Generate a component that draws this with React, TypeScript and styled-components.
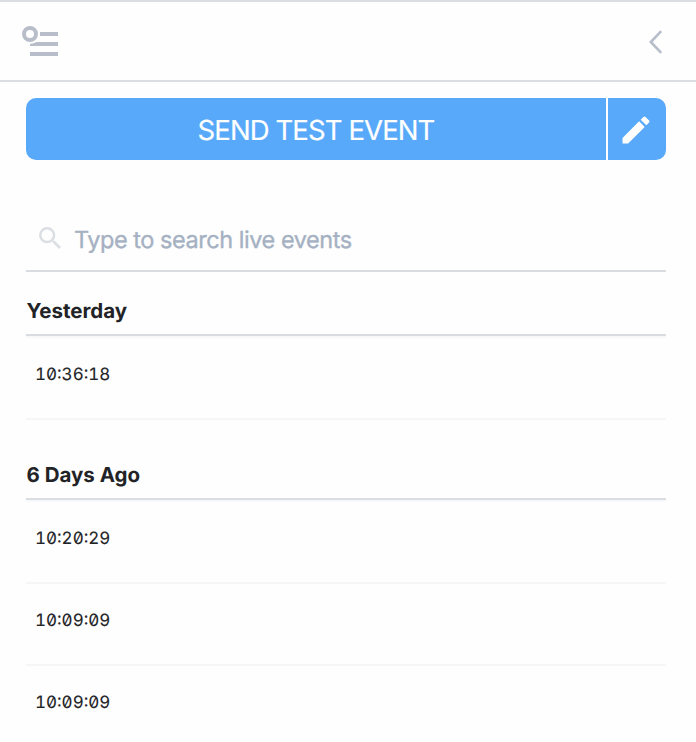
import React from "react";
import styled, { createGlobalStyle } from "styled-components";

const GlobalStyle = createGlobalStyle`
  *, *::before, *::after { box-sizing: border-box; }
  body {
    margin: 0;
    background: #fefefe;
    color: #222326;
    font-family: Inter, "Liberation Sans", sans-serif;
    text-rendering: geometricPrecision;
    overflow: hidden;
  }
  button { font-family: inherit; border: 0; padding: 0; }
  svg { display: block; flex: none; }
`;

const Panel = styled.main`
  height: 742px;
  overflow: hidden;
`;

const Toolbar = styled.header`
  display: flex;
  justify-content: space-between;
  height: 82px;
  padding: 24px 30px 0 22px;
  border-top: 2px solid #dbdfe4;
  border-bottom: 2px solid #dbdfe4;
`;

const IconButton = styled.button`
  display: flex;
  align-items: flex-start;
  background: none;
  height: 36px;
`;

const Content = styled.div`
  padding: 16px 30px 0 26px;
`;

const ButtonGroup = styled.div`
  display: flex;
  gap: 2px;
  height: 62px;
  border-radius: 10px;
  overflow: hidden;
`;

const ActionButton = styled.button<{ $wide?: boolean }>`
  display: flex;
  align-items: center;
  justify-content: ${(p) => (p.$wide ? "center" : "flex-start")};
  flex: ${(p) => (p.$wide ? "1" : "0 0 58px")};
  padding: 2px 0 0 ${(p) => (p.$wide ? "0" : "10px")};
  background: #58a9f9;
  color: #fff;
  font-size: 27.5px;
  line-height: 62px;
  letter-spacing: -0.9px;
  -webkit-text-stroke: 0.2px currentColor;
  text-rendering: geometricPrecision;
`;

const SearchField = styled.label`
  display: flex;
  height: 64px;
  margin-top: 48px;
  padding-left: 13px;
  gap: 13px;
  border-bottom: 2px solid #d9dde2;
`;

const SearchIcon = styled.svg`
  margin-top: 19px;
`;

const SearchInput = styled.input`
  flex: 1;
  min-width: 0;
  border: 0;
  outline: 0;
  padding: 1px 0 0;
  height: 62px;
  background: none;
  font-family: inherit;
  font-size: 23.5px;
  letter-spacing: -0.46px;
  text-rendering: geometricPrecision;
  color: #222326;
  &::placeholder {
    color: #a5b1c2;
    opacity: 1;
    -webkit-text-stroke: 0.35px #a5b1c2;
  }
`;

const DaySection = styled.section`
  & + & { margin-top: 16px; }
`;

const DayTitle = styled.h2`
  height: 64px;
  margin: 0;
  padding: 27px 0 0 0.5px;
  border-bottom: 2px solid #d9dde2;
  font-size: 20.5px;
  line-height: 24px;
  font-weight: 700;
  letter-spacing: 0;
`;

const EventList = styled.ul`
  list-style: none;
  margin: 0;
  padding: 0;
  border-top: 2px solid #f7f8f9;
`;

const EventRow = styled.li`
  height: 82px;
  padding: 25px 9px 0;
  border-bottom: 2px solid #f5f6f7;
  font-size: 17px;
  line-height: 24px;
  font-feature-settings: "zero" 1, "tnum" 1;
  -webkit-text-stroke: 0.1px currentColor;
`;

const days = [
  { title: "Yesterday", events: ["10:36:18"] },
  { title: "6 Days Ago", events: ["10:20:29", "10:09:09", "10:09:09"] },
];

function FilterIcon() {
  return (
    <svg width="37" height="32" viewBox="0 0 37 32" fill="#b7bec9">
      <circle cx="8" cy="8" r="6" fill="none" stroke="#b7bec9" strokeWidth="4" />
      <path d="M18 6h18v4H18zM8 18q4-.4 6.5-2H36v4H8zM8 26h28v4H8z" />
    </svg>
  );
}

function ChevronLeftIcon() {
  return (
    <svg width="18" height="32" viewBox="0 0 18 32" fill="none" stroke="#b7bec9" strokeWidth="2.6">
      <path d="M13.2 5.2 2.8 16 13.2 26.8" />
    </svg>
  );
}

function PencilIcon() {
  return (
    <svg width="36" height="36" viewBox="0 0 24 24" fill="#fff">
      <path d="M3 17.25V21h3.75L17.81 9.94l-3.75-3.75L3 17.25zM20.71 7.04a1 1 0 0 0 0-1.41l-2.34-2.34a1 1 0 0 0-1.41 0l-1.83 1.83 3.75 3.75 1.83-1.83z" />
    </svg>
  );
}

export default function App() {
  return (
    <>
      <GlobalStyle />
      <Panel>
        <Toolbar>
          <IconButton aria-label="Filter"><FilterIcon /></IconButton>
          <IconButton aria-label="Back"><ChevronLeftIcon /></IconButton>
        </Toolbar>
        <Content>
          <ButtonGroup>
            <ActionButton $wide>SEND TEST EVENT</ActionButton>
            <ActionButton aria-label="Edit test event"><PencilIcon /></ActionButton>
          </ButtonGroup>
          <SearchField>
            <SearchIcon width="22" height="22" viewBox="3 3 17.5 17.5" fill="#dbdfe4">
              <path d="M15.5 14h-.79l-.28-.27A6.47 6.47 0 0 0 16 9.5 6.5 6.5 0 1 0 9.5 16c1.61 0 3.09-.59 4.23-1.57l.27.28v.79l5 4.99L20.49 19l-4.99-5zm-6 0a4.5 4.5 0 1 1 0-9 4.5 4.5 0 0 1 0 9z" />
            </SearchIcon>
            <SearchInput placeholder="Type to search live events" />
          </SearchField>
          {days.map((day) => (
            <DaySection key={day.title}>
              <DayTitle>{day.title}</DayTitle>
              <EventList>
                {day.events.map((time, i) => (
                  <EventRow key={i}>{time}</EventRow>
                ))}
              </EventList>
            </DaySection>
          ))}
        </Content>
      </Panel>
    </>
  );
}
